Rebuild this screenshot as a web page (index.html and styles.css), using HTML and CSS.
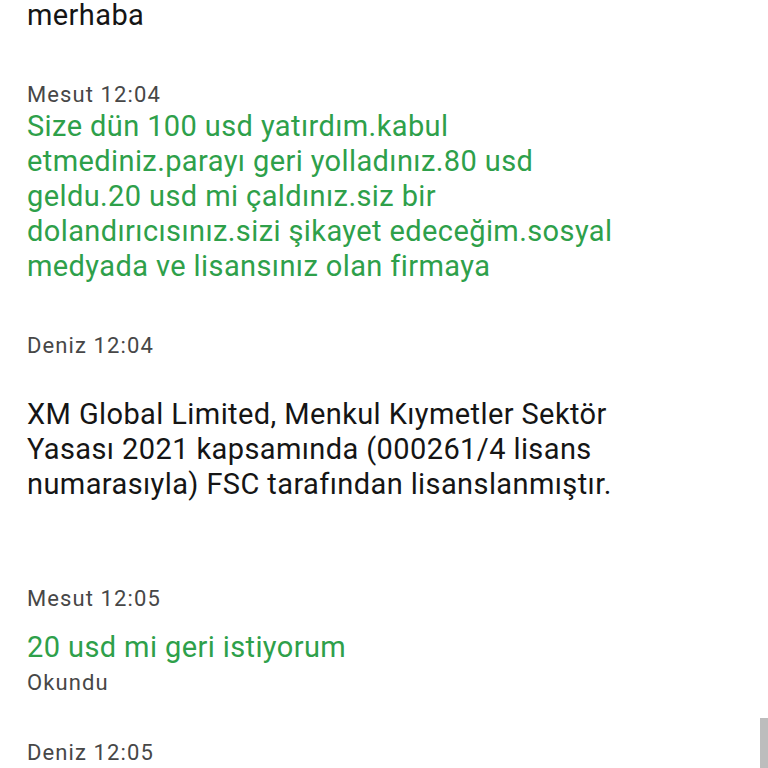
FILE: index.html
```html
<!DOCTYPE html>
<html lang="tr">
<head>
  <meta charset="UTF-8" />
  <meta name="viewport" content="width=device-width, initial-scale=1" />
  <title>Sohbet</title>
  <link rel="stylesheet" href="styles.css">
</head>
<body>

  <div class="chat">
    <div class="msg first">
      <p class="text">merhaba</p>
    </div>

    <div class="msg">
      <p class="meta">Mesut 12:04</p>
      <p class="text mine">Size dün 100 usd yatırdım.kabul etmediniz.parayı geri yolladınız.80 usd geldu.20 usd mi çaldınız.siz bir dolandırıcısınız.sizi şikayet edeceğim.sosyal medyada ve lisansınız olan firmaya</p>
    </div>

    <div class="msg">
      <p class="meta">Deniz 12:04</p>
      <p class="text padded">XM Global Limited, Menkul Kıymetler Sektör Yasası 2021 kapsamında (000261/4 lisans numarasıyla) FSC tarafından lisanslanmıştır.</p>
    </div>

    <div class="msg">
      <p class="meta">Mesut 12:05</p>
      <p class="text mine spaced">20 usd mi geri istiyorum</p>
      <p class="meta status">Okundu</p>
    </div>

    <div class="msg last">
      <p class="meta">Deniz 12:05</p>
    </div>
  </div>

  <div class="scrollbar"></div>

</body>
</html>
```

FILE: styles.css
```css
html, body {
  height: 100%;
  overflow: hidden;
}

body {
  background-color: #fff;
  color: #151515;
  font-family: Roboto, 'Noto Sans', sans-serif;
  margin: 0;
}

p {
  margin: 0;
}

.chat {
  padding: 0 0 0 27px;
  margin-top: -2px;
}

.msg {
  max-width: 618px;
  margin-top: 48px;
}

.msg.first {
  margin-top: 0;
}

.msg.last {
  margin-top: 42px;
}

.meta {
  color: #474747;
  font-size: 22px;
  line-height: 28px;
  letter-spacing: 1.1px;
}

.text {
  font-size: 29px;
  line-height: 35px;
  letter-spacing: 0.4px;
}

.text.mine {
  color: #2ea04a;
}

/* agent replies come with an empty line before and after */
.text.padded {
  padding: 37px 0 35px;
}

.text.spaced {
  margin-top: 17px;
}

.meta.status {
  margin-top: 4px;
}

.scrollbar {
  position: fixed;
  right: 0;
  bottom: 0;
  width: 8px;
  height: 50px;
  background-color: #bdbdbd;
}
```
